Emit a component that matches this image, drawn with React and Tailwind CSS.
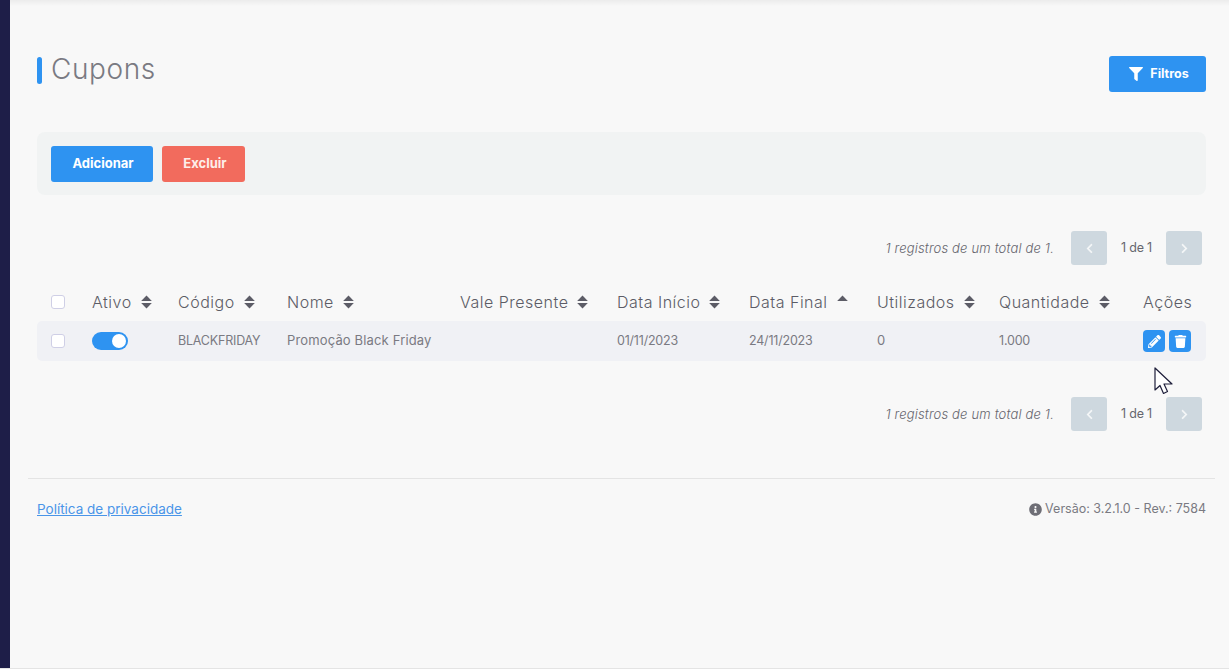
import { FaFilter, FaPencilAlt, FaTrash, FaChevronLeft, FaChevronRight, FaInfoCircle } from 'react-icons/fa'

const font = { fontFamily: '"Inter", "Noto Sans", sans-serif' }

const COLUMNS = [
  { label: 'Ativo', sort: 'both' },
  { label: 'Código', sort: 'both' },
  { label: 'Nome', sort: 'both' },
  { label: 'Vale Presente', sort: 'both' },
  { label: 'Data Início', sort: 'both' },
  { label: 'Data Final', sort: 'up' },
  { label: 'Utilizados', sort: 'both' },
  { label: 'Quantidade', sort: 'both' },
]

const GRID = 'grid grid-cols-[41px_86px_109px_173px_157px_132px_128px_122px_144px_1fr] items-center pl-[14px]'

function SortIcon({ sort }) {
  return (
    <svg width="11" height="14" viewBox="0 0 11 14" className="ml-[9px] shrink-0" fill="#5c5c66">
      <path d="M5.5 0.5 L10.8 6 H0.2 Z" />
      {sort === 'both' && <path d="M5.5 13.5 L10.8 8 H0.2 Z" />}
    </svg>
  )
}

function Checkbox() {
  return <span className="block w-[14px] h-[14px] rounded-[3px] border border-[#cfcfe6] bg-white" />
}

function Pager() {
  return (
    <div className="flex items-center justify-end pr-[4px]">
      <span className="pt-[1px] text-[13px] italic font-light tracking-[0.17px] text-[#66666e] mr-[17px]">1 registros de um total de 1.</span>
      <span className="w-[36px] h-[34px] rounded-[3px] bg-[#ced8df] flex items-center justify-center text-[#f4f6f7]">
        <FaChevronLeft size={11} />
      </span>
      <span className="w-[59px] pt-[1px] text-center text-[12.5px] tracking-[-0.2px] text-[#66666e]">1 de 1</span>
      <span className="w-[36px] h-[34px] rounded-[3px] bg-[#ced8df] flex items-center justify-center text-[#f4f6f7]">
        <FaChevronRight size={11} />
      </span>
    </div>
  )
}

export default function App() {
  return (
    <div style={font} className="relative flex h-[669px] overflow-hidden bg-[#f8f8f8] border-b border-[#e4e4e4]">
      <aside className="w-[10px] shrink-0 bg-[#1e1e48]" />
      <div className="relative flex-1 min-w-0">
        <div className="h-[6px] bg-gradient-to-b from-[#ececec] to-[#f8f8f8]" />
        <main className="pl-[27px] pr-[23px] pt-[50px]">
          <div className="flex items-start justify-between h-[76px]">
            <div className="flex items-center">
              <span className="w-[5px] h-[27px] rounded-[3px] bg-[#2e93f1]" />
              <h1 className="ml-[9px] pb-[2px] text-[28px] leading-[27px] font-light tracking-[0.6px] text-[#7a7a82]">Cupons</h1>
            </div>
            <button className="w-[97px] h-[36px] pl-[3px] rounded-[3px] bg-[#2e93f1] flex items-center justify-center gap-[7px] text-white text-[12.5px] font-bold">
              <FaFilter size={14} />
              Filtros
            </button>
          </div>

          <div className="h-[63px] rounded-[8px] bg-[#f1f3f3] flex items-center pl-[14px] gap-[9px]">
            <button className="w-[102px] h-[36px] pt-[1px] pl-[2px] rounded-[3px] bg-[#2e93f1] text-white text-[13px] font-bold">Adicionar</button>
            <button className="w-[83px] h-[36px] pt-[1px] pl-[3px] rounded-[3px] bg-[#f26b5d] text-[#fdeee9] text-[13px] font-bold">Excluir</button>
          </div>

          <div className="mt-[36px]">
            <Pager />
          </div>

          <div className={`${GRID} h-[38px] mt-[18px] text-[16px] font-light text-[#5c5c66] tracking-[0.5px]`}>
            <Checkbox />
            {COLUMNS.map((c) => (
              <div key={c.label} className="flex items-center">
                <span>{c.label}</span>
                <SortIcon sort={c.sort} />
              </div>
            ))}
            <span>Ações</span>
          </div>

          <div className={`${GRID} h-[40px] rounded-[5px] bg-[#f0f1f5] text-[13px] text-[#7a7a82]`}>
            <Checkbox />
            <span className="block w-[36px] h-[18px] rounded-full bg-[#2e93f1] relative">
              <span className="absolute right-[2px] top-[2px] w-[14px] h-[14px] rounded-full bg-white" />
            </span>
            <span className="text-[12.5px] tracking-[-0.2px]">BLACKFRIDAY</span>
            <span className="tracking-[0.15px]">Promoção Black Friday</span>
            <span />
            <span className="text-[12.5px] tracking-[-0.2px]">01/11/2023</span>
            <span className="text-[12.5px] tracking-[-0.2px]">24/11/2023</span>
            <span>0</span>
            <span className="text-[12.5px] tracking-[-0.2px]">1.000</span>
            <div className="flex gap-[4px]">
              <span className="w-[22px] h-[22px] rounded-[4px] bg-[#2e93f1] flex items-center justify-center text-white">
                <FaPencilAlt size={13} />
              </span>
              <span className="w-[22px] h-[22px] rounded-[4px] bg-[#2e93f1] flex items-center justify-center text-white">
                <FaTrash size={13} />
              </span>
            </div>
          </div>

          <div className="mt-[36px]">
            <Pager />
          </div>
        </main>

        <div className="mt-[47px] mx-[18px] mr-[14px] border-t border-[#e4e4e4]" />
        <footer className="flex items-center justify-between pl-[27px] pr-[23px] mt-[20px] text-[12.5px] text-[#7a7a82]">
          <a href="#" className="underline text-[13.5px] text-[#4a95e8]">Política de privacidade</a>
          <span className="flex items-center gap-[3px]">
            <FaInfoCircle size={13} color="#6e6e76" />
            Versão: 3.2.1.0 - Rev.: 7584
          </span>
        </footer>

        {/* mouse pointer captured in the screenshot */}
        <svg width="20" height="28" viewBox="0 0 20 28" className="absolute left-[1144px] top-[367px]">
          <path d="M1 1 V23 L6 18.5 L9.5 26.5 L13.5 24.5 L10 17 H18 Z" fill="white" stroke="#1e1e3a" strokeWidth="1.2" strokeLinejoin="round" />
        </svg>
      </div>
    </div>
  )
}
